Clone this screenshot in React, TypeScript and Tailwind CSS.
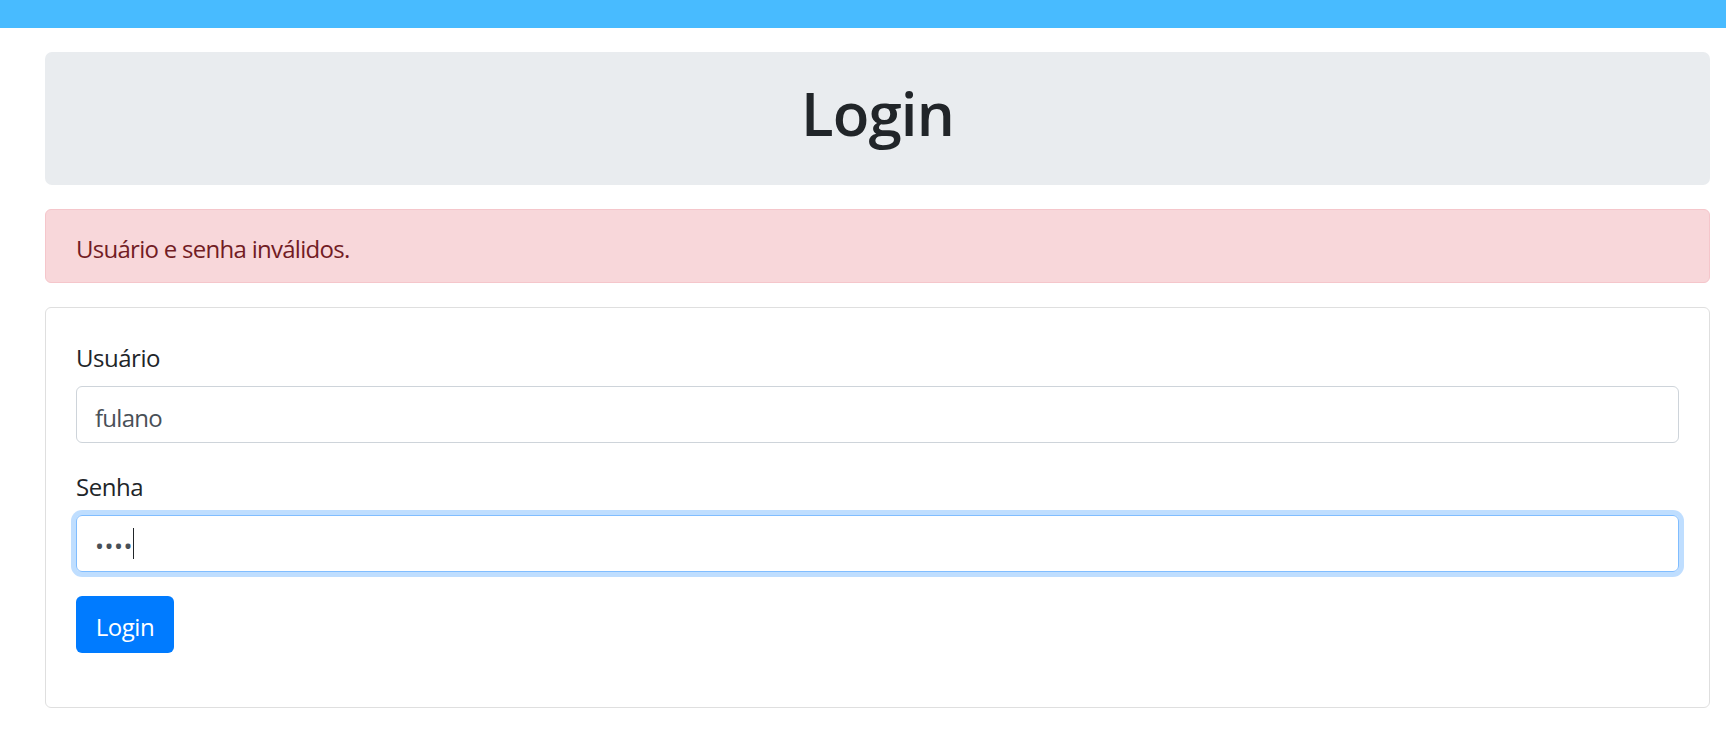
export default function App() {
  return (
    <div className="min-h-screen bg-white text-[#212529] font-['Open_Sans',sans-serif]">
      <div className="h-[28px] bg-[#48bbff]" />

      <div className="mt-6 ml-[45px] w-[1665px]">
        <div className="mb-6 rounded-[7px] bg-[#e9ecef] px-6 pt-[25px] pb-6">
          <h1 className="mb-3 text-center text-[60px] font-semibold leading-[72px] tracking-[-0.015em]">Login</h1>
        </div>

        <div className="mb-6 rounded-[6px] border border-[#f5c6cb] bg-[#f8d7da] px-[30px] pt-[21px] pb-[15px] text-[24px] leading-[36px] tracking-[-0.03em] text-[#721c24]">
          Usuário e senha inválidos.
        </div>

        <div className="rounded-[6px] border border-[#dfdfdf] p-[30px] tracking-[-0.03em]">
          <form onSubmit={(e) => e.preventDefault()}>
            <div className="mb-6">
              <label className="mb-3 block pt-[3px] text-[24px] leading-[33px]">Usuário</label>
              <input
                type="text"
                defaultValue="fulano"
                className="block h-[57px] w-full rounded-[6px] border border-[#ced4da] px-[18px] pt-[5px] text-[24px] tracking-[-0.03em] text-[#495057] outline-none"
              />
            </div>
            <div className="mb-6">
              <label className="mb-3 block pt-[3px] text-[24px] leading-[33px]">Senha</label>
              <div className="relative">
                <input
                  type="password"
                  defaultValue="1234"
                  className="block h-[57px] w-full rounded-[6px] border border-[#80bdff] px-[18px] pt-[3px] text-[24px] tracking-[0.02em] text-[#495057] shadow-[0_0_0_5px_rgba(0,123,255,0.25)] outline-none"
                />
                <span className="pointer-events-none absolute left-[57px] top-[13px] h-[31px] w-px bg-[#212529]" />
              </div>
            </div>
            <div className="mb-6">
              <button
                type="submit"
                className="h-[57px] w-[98px] rounded-[6px] bg-[#007bff] pt-[5px] text-center text-[24px] leading-[36px] tracking-[-0.02em] text-white"
              >
                Login
              </button>
            </div>
          </form>
        </div>
      </div>
    </div>
  );
}
